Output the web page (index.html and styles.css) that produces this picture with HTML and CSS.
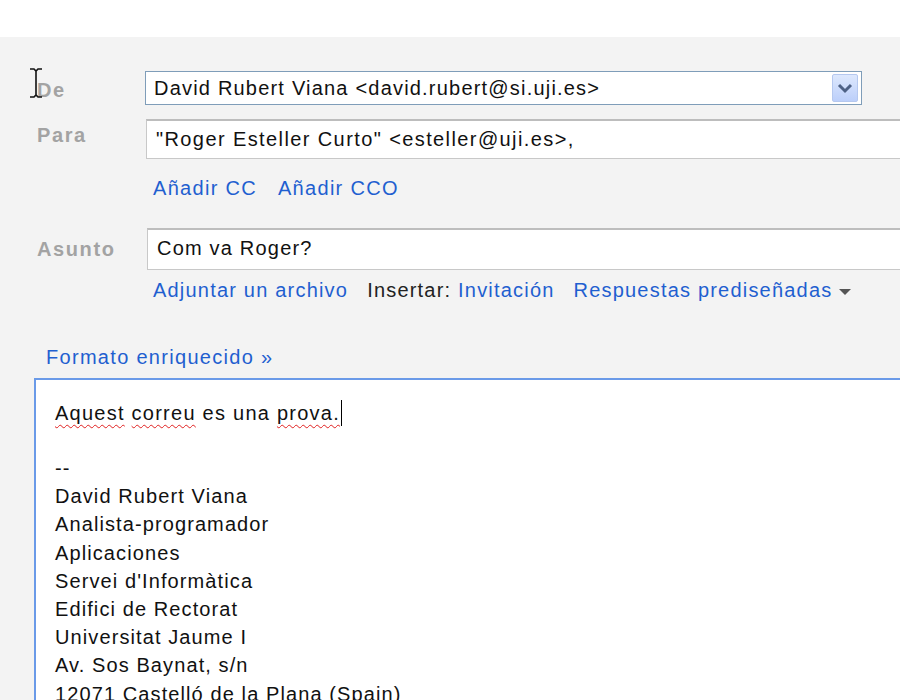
FILE: index.html
```html
<!DOCTYPE html>
<html lang="es">
<head>
<meta charset="utf-8">
<title>Redactar</title>
<link rel="stylesheet" href="styles.css">
</head>
<body>
<div class="topbar"></div>
<div class="compose">
  <div class="form">
    <div class="label label-de"><span class="ibeam"><svg width="14" height="30" viewBox="0 0 14 30"><path d="M1 1h4l2 2 2-2h4M7 3v24M1 29h4l2-2 2 2h4" fill="none" stroke="#111" stroke-width="1.6"/></svg></span>De</div>
    <div class="field">
      <div class="select">
        <span class="select-text">David Rubert Viana &lt;david.rubert@si.uji.es&gt;</span>
        <span class="select-btn"><svg width="16" height="12" viewBox="0 0 16 12"><path d="M2 3l6 6 6-6" fill="none" stroke="#4d6185" stroke-width="3"/></svg></span>
      </div>
    </div>

    <div class="label label-para">Para</div>
    <div class="field">
      <div class="input input-para">"Roger Esteller Curto" &lt;esteller@uji.es&gt;,</div>
      <div class="links links-cc"><a class="link">Añadir CC</a><a class="link">Añadir CCO</a></div>
    </div>

    <div class="label label-asunto">Asunto</div>
    <div class="field">
      <div class="input input-asunto">Com va Roger?</div>
      <div class="links links-attach">
        <a class="link">Adjuntar un archivo</a>
        <span class="insert"><span class="plain">Insertar:</span> <a class="link">Invitación</a></span>
        <a class="link">Respuestas prediseñadas <span class="caret"></span></a>
      </div>
    </div>
  </div>

  <div class="rich"><a class="link">Formato enriquecido »</a></div>

  <div class="editor">
    <div class="first"><span class="sp">Aquest</span> <span class="sp">correu</span> es una <span class="sp">prova.</span><span class="cursor"></span></div>
    <div class="blank"></div>
    <div>--</div>
    <div>David Rubert Viana</div>
    <div>Analista-programador</div>
    <div>Aplicaciones</div>
    <div>Servei d'Informàtica</div>
    <div>Edifici de Rectorat</div>
    <div>Universitat Jaume I</div>
    <div>Av. Sos Baynat, s/n</div>
    <div>12071 Castelló de la Plana (Spain)</div>
  </div>
</div>
</body>
</html>
```
FILE: styles.css
```css
html, body {
  margin: 0;
  padding: 0;
  overflow: hidden;
  width: 900px;
  height: 700px;
  background: #f3f3f3;
  font-family: "Liberation Sans", Arial, sans-serif;
  font-size: 20px;
  color: #111;
}
.topbar {
  height: 37px;
  background: #ffffff;
}
.compose {
  padding: 34px 0 0 0;
  width: 1100px;
  letter-spacing: 1.2px;
}
.form {
  display: grid;
  grid-template-columns: 145px 1fr;
  row-gap: 14px;
}
.label {
  padding-left: 37px;
  font-weight: bold;
  color: #a3a3a3;
  font-size: 20px;
  letter-spacing: 1.6px;
  position: relative;
}
.label-de { padding-top: 8px; }
.label-para { padding-top: 5px; }
.label-asunto { padding-top: 10px; }
.ibeam {
  position: absolute;
  left: 29px;
  top: -3px;
}
.select {
  width: 717px;
  height: 34px;
  box-sizing: border-box;
  border: 1px solid #7f9db9;
  background: #fff;
  display: flex;
  align-items: center;
  justify-content: space-between;
  padding: 0 3px 0 8px;
}
.select-text { line-height: 32px; }
.select-btn {
  width: 26px;
  height: 28px;
  box-sizing: border-box;
  border: 1px solid #b5c8ef;
  border-radius: 2px;
  background: linear-gradient(#dde8fd, #bccffa);
  display: flex;
  align-items: center;
  justify-content: center;
}
.input {
  box-sizing: border-box;
  height: 40px;
  border: 1px solid #c8c8c8;
  border-top: 2px solid #bdbdbd;
  background: #fff;
  padding: 0 9px;
  line-height: 37px;
  width: 960px;
  margin-left: 1px;
}
.input-para { letter-spacing: 1.4px; }
.input-asunto {
  height: 42px;
  margin-left: 2px;
}
.links {
  display: flex;
  gap: 21px;
  padding-left: 8px;
  letter-spacing: 1.3px;
}
.links-cc {
  margin-top: 18px;
  margin-bottom: 14px;
}
.links-attach {
  margin-top: 9px;
  gap: 19px;
  letter-spacing: 1.2px;
}
.link {
  color: #1f5fd0;
  text-decoration: none;
}
.plain { color: #222; }
.caret {
  display: inline-block;
  width: 0;
  height: 0;
  border-left: 6px solid transparent;
  border-right: 6px solid transparent;
  border-top: 6px solid #555;
  vertical-align: middle;
  margin-left: 0;
}
.rich {
  padding: 43px 0 0 46px;
  line-height: 24px;
  letter-spacing: 1.3px;
}
.editor {
  margin: 9px 0 0 34px;
  border: 2px solid #6a9ae8;
  border-right: none;
  background: #fff;
  padding: 18px 0 0 19px;
  line-height: 28.2px;
  font-size: 20px;
  color: #111;
  height: 400px;
  letter-spacing: 1.1px;
}
.first { line-height: 30px; letter-spacing: 1.25px; }
.blank { height: 26px; }
.sp {
  text-decoration: underline wavy #e02020;
  text-decoration-thickness: 1px;
  text-underline-offset: 4px;
}
.cursor {
  display: inline-block;
  width: 1px;
  height: 26px;
  background: #000;
  vertical-align: -6px;
  margin-left: 1px;
}
```
